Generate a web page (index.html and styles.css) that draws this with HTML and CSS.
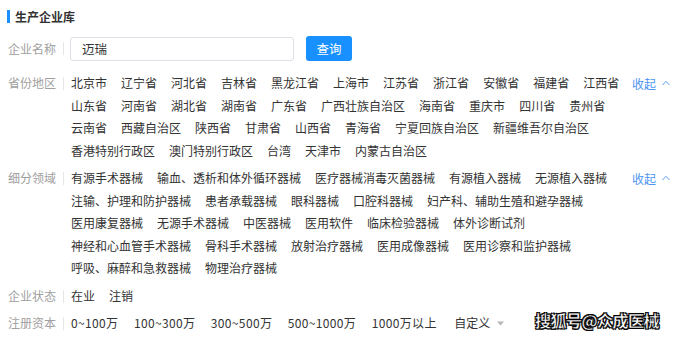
FILE: index.html
```html
<!DOCTYPE html>
<html lang="zh-CN">
<head>
<meta charset="utf-8">
<title>生产企业库</title>
<link rel="stylesheet" href="styles.css">
</head>
<body>
<div class="page">
  <div class="title">生产企业库</div>

  <div class="row name-row">
    <div class="label">企业名称</div>
    <div class="search">
      <div class="input">迈瑞</div>
      <button class="btn">查询</button>
    </div>
  </div>

  <div class="row section">
    <div class="label">省份地区</div>
    <div class="items">
      <span>北京市</span><span>辽宁省</span><span>河北省</span><span>吉林省</span><span>黑龙江省</span><span>上海市</span><span>江苏省</span><span>浙江省</span><span>安徽省</span><span>福建省</span><span>江西省</span>
      <span>山东省</span><span>河南省</span><span>湖北省</span><span>湖南省</span><span>广东省</span><span>广西壮族自治区</span><span>海南省</span><span>重庆市</span><span>四川省</span><span>贵州省</span>
      <span>云南省</span><span>西藏自治区</span><span>陕西省</span><span>甘肃省</span><span>山西省</span><span>青海省</span><span>宁夏回族自治区</span><span>新疆维吾尔自治区</span>
      <span>香港特别行政区</span><span>澳门特别行政区</span><span>台湾</span><span>天津市</span><span>内蒙古自治区</span>
    </div>
    <div class="toggle">收起<svg class="chev" width="8" height="6" viewBox="0 0 8 6"><polyline points="0.5,5 4,1.3 7.5,5" fill="none" stroke="#5a9cf0" stroke-width="1"/></svg></div>
  </div>

  <div class="row section">
    <div class="label">细分领域</div>
    <div class="items">
      <span>有源手术器械</span><span>输血、透析和体外循环器械</span><span>医疗器械消毒灭菌器械</span><span>有源植入器械</span><span>无源植入器械</span>
      <span>注输、护理和防护器械</span><span>患者承载器械</span><span>眼科器械</span><span>口腔科器械</span><span>妇产科、辅助生殖和避孕器械</span>
      <span>医用康复器械</span><span>无源手术器械</span><span>中医器械</span><span>医用软件</span><span>临床检验器械</span><span>体外诊断试剂</span>
      <span>神经和心血管手术器械</span><span>骨科手术器械</span><span>放射治疗器械</span><span>医用成像器械</span><span>医用诊察和监护器械</span>
      <span>呼吸、麻醉和急救器械</span><span>物理治疗器械</span>
    </div>
    <div class="toggle">收起<svg class="chev" width="8" height="6" viewBox="0 0 8 6"><polyline points="0.5,5 4,1.3 7.5,5" fill="none" stroke="#5a9cf0" stroke-width="1"/></svg></div>
  </div>

  <div class="row section">
    <div class="label">企业状态</div>
    <div class="items">
      <span>在业</span><span>注销</span>
    </div>
  </div>

  <div class="row section">
    <div class="label">注册资本</div>
    <div class="items money">
      <span>0~100万</span><span>100~300万</span><span>300~500万</span><span>500~1000万</span><span>1000万以上</span><span class="custom">自定义<svg class="caret" width="7" height="5" viewBox="0 0 7 5"><polygon points="0,0.5 7,0.5 3.5,4.5" fill="#b5b5b5"/></svg></span>
    </div>
  </div>

  <div class="watermark">搜狐号@众成医械</div>
</div>
</body>
</html>
```
FILE: styles.css
```css
* { box-sizing: border-box; }
html, body {
  margin: 0;
  padding: 0;
  background: #ffffff;
}
body {
  font-family: "Noto Sans CJK SC", "Noto Sans", sans-serif;
  font-size: 12px;
  color: #333333;
  width: 674px;
  height: 338px;
  overflow: hidden;
}
.page {
  position: relative;
  height: 338px;
  padding: 10px 0 0 8px;
}
.title {
  margin-left: -1px;
  border-left: 3px solid #1890ff;
  padding-left: 5px;
  height: 13px;
  line-height: 13px;
  font-size: 12px;
  font-weight: 700;
  color: #333;
}
.row {
  display: flex;
  align-items: flex-start;
}
.label {
  position: relative;
  width: 63px;
  flex: none;
  color: #a0a0a0;
  line-height: 22.5px;
  height: 22.5px;
}
.label::after {
  content: "";
  position: absolute;
  left: 55px;
  top: 5px;
  width: 1px;
  height: 13px;
  background: #e6e6e6;
}
.name-row {
  margin-top: 13px;
  align-items: center;
  height: 25px;
}
.name-row .label {
  line-height: 25px;
  height: 25px;
}
.name-row .label::after { top: 6px; }
.search {
  display: flex;
  align-items: center;
  margin-left: -1px;
}
.input {
  width: 224px;
  height: 24px;
  border: 1px solid #dcdfe6;
  border-radius: 3px;
  padding-left: 11px;
  line-height: 22px;
  font-size: 12.5px;
  color: #333;
}
.btn {
  margin-left: 12px;
  width: 46px;
  height: 25px;
  border: none;
  border-radius: 3px;
  background: #1890ff;
  color: #fff;
  font-family: inherit;
  font-size: 12.5px;
  line-height: 25px;
  padding: 0;
}
.section {
  margin-top: 5px;
}
.name-row + .section {
  margin-top: 11px;
}
.items {
  width: 562px;
  flex: none;
  display: flex;
  flex-wrap: wrap;
  column-gap: 14px;
  line-height: 22.5px;
}
.items span {
  white-space: nowrap;
  color: #333;
}
.money {
  column-gap: 15.5px;
}
.money span {
  letter-spacing: 0.35px;
}
.items .custom {
  margin-left: 2px;
  letter-spacing: 0;
  display: inline-flex;
  align-items: center;
}
.caret {
  margin-left: 7px;
}
.toggle {
  display: flex;
  align-items: center;
  height: 22.5px;
  color: #4d94f5;
  margin-left: -1px;
}
.chev {
  margin-left: 6px;
  margin-top: -1px;
}
.watermark {
  position: absolute;
  left: 535px;
  top: 310px;
  font-size: 16px;
  font-weight: 700;
  line-height: 20px;
  color: #ffffff;
  -webkit-text-stroke: 0.4px #000;
  text-shadow: 1px 1px 0 #000, -1px -1px 0 #000, 1px -1px 0 #000, -1px 1px 0 #000;
  letter-spacing: -0.5px;
}
```
